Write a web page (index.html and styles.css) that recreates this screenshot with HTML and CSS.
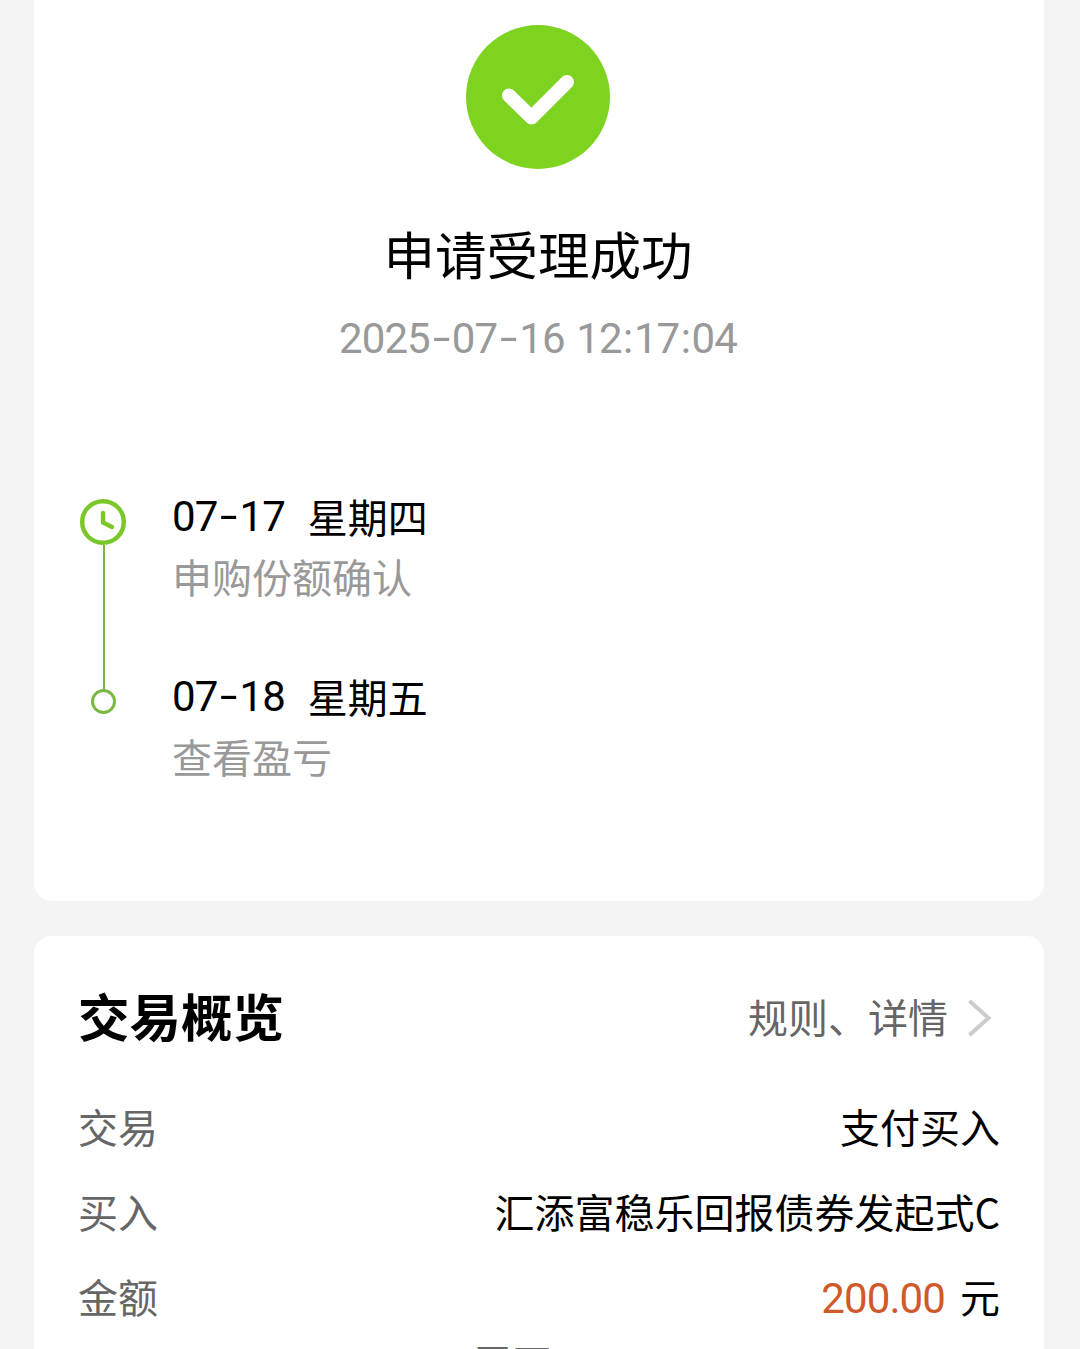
FILE: index.html
```html
<!DOCTYPE html>
<html lang="zh-CN">
<head>
    <meta charset="UTF-8">
    <meta name="viewport" content="width=device-width, initial-scale=1.0">
    <title>申请受理成功</title>
    <link rel="stylesheet" href="styles.css">
</head>
<body>
    <main>
        <section class="card result">
            <svg class="success-icon" viewBox="0 0 144 144">
                <circle cx="72" cy="72" r="72" fill="#7ed321"/>
                <path d="M43 70.500 L65.500 92.500 L101 57" fill="none" stroke="#fff" stroke-width="14" stroke-linecap="round" stroke-linejoin="round"/>
            </svg>
            <h1>申请受理成功</h1>
            <p class="time num">2025<span class="dash">-</span>07<span class="dash">-</span>16 12<span class="colon">:</span>17<span class="colon">:</span>04</p>

            <ul class="timeline">
                <li>
                    <div class="marker">
                        <svg class="clock" viewBox="0 0 46 46">
                            <circle cx="23" cy="23" r="20.800" fill="none" stroke="#7ac729" stroke-width="4.400"/>
                            <path d="M23 14 V23.500 L32 28" fill="none" stroke="#7ac729" stroke-width="4.400" stroke-linecap="round" stroke-linejoin="round"/>
                        </svg>
                        <span class="line"></span>
                    </div>
                    <div class="step">
                        <p class="date"><span class="num">07<span class="dash">-</span>17</span><span>星期四</span></p>
                        <p class="desc">申购份额确认</p>
                    </div>
                </li>
                <li>
                    <div class="marker last">
                        <span class="line"></span>
                        <span class="dot"></span>
                    </div>
                    <div class="step">
                        <p class="date"><span class="num">07<span class="dash">-</span>18</span><span>星期五</span></p>
                        <p class="desc">查看盈亏</p>
                    </div>
                </li>
            </ul>
        </section>

        <section class="card overview">
            <div class="overview-head">
                <h2>交易概览</h2>
                <a class="rules" href="#">
                    规则、详情
                    <svg class="arrow" viewBox="0 0 24 38">
                        <path d="M1.500 2 L20.500 19 L1.500 36" fill="none" stroke="#ccc" stroke-width="4"/>
                    </svg>
                </a>
            </div>
            <dl>
                <div class="row">
                    <dt>交易</dt>
                    <dd>支付买入</dd>
                </div>
                <div class="row">
                    <dt>买入</dt>
                    <dd>汇添富稳乐回报债券发起式C</dd>
                </div>
                <div class="row">
                    <dt>金额</dt>
                    <dd><span class="amount num">200.00</span>元</dd>
                </div>
            </dl>
            <div class="more">展开</div>
        </section>
    </main>
</body>
</html>
```

FILE: styles.css
```css
/* Basic reset */
* {
    margin: 0;
    padding: 0;
    box-sizing: border-box;
}

body {
    height: 1349px;
    overflow: hidden;
    font-family: 'Noto Sans CJK SC', sans-serif;
    font-size: 40px;
    color: #000;
    background-color: #f4f4f4;
}

main {
    height: 1349px;
    padding: 0 36px 0 34px;
    overflow: hidden;
}

.num {
    font-family: Roboto, 'Noto Sans CJK SC', sans-serif;
}

.dash {
    display: inline-block;
    width: 22px;
    text-align: center;
    transform: translateY(-1px) scaleX(1.5);
}

.colon {
    padding: 0 1.5px;
}

.card {
    background-color: #fff;
    border-radius: 18px;
}

/* Result card */
.result {
    height: 901px;
    padding: 25px 47px 0 45px;
    border-top-left-radius: 0;
    border-top-right-radius: 0;
}

.success-icon {
    display: block;
    width: 144px;
    height: 144px;
    margin: 0 auto;
}

.result h1 {
    margin-top: 54px;
    font-size: 51.5px;
    font-weight: 400;
    line-height: 60px;
    text-align: center;
}

.time {
    margin-top: 31px;
    font-size: 42px;
    line-height: 50px;
    letter-spacing: -0.9px;
    word-spacing: 2px;
    color: #999;
    text-align: center;
}

/* Timeline */
.timeline {
    margin-top: 122px;
    padding-left: 1px;
    list-style: none;
}

.timeline li {
    display: flex;
    gap: 46px;
    height: 180px;
}

.marker {
    display: flex;
    flex-direction: column;
    align-items: center;
    width: 46px;
    padding-top: 13px;
}

.clock {
    width: 46px;
    height: 46px;
}

.line {
    flex: 1;
    width: 2px;
    margin-left: 2px;
    background-color: #78b843;
}

.marker.last {
    padding-top: 0;
}

.marker.last .line {
    flex: 0 0 23px;
}

.dot {
    width: 25px;
    height: 25px;
    border: 3px solid #78b843;
    border-radius: 50%;
}

.step p {
    height: 60px;
    line-height: 60px;
}

.date {
    display: flex;
    gap: 23px;
}

.date .num {
    padding-top: 1px;
    font-size: 42px;
    letter-spacing: -0.9px;
}

.desc {
    color: #999;
}

/* Overview card */
.overview {
    height: 500px;
    margin-top: 35px;
    padding: 38px 44px 0;
}

.overview-head {
    display: flex;
    justify-content: space-between;
    align-items: center;
    height: 80px;
}

.overview-head h2 {
    font-size: 51.5px;
    font-weight: 700;
}

.rules {
    display: flex;
    align-items: center;
    gap: 20px;
    margin-right: 8px;
    padding-top: 3px;
    color: #666;
    text-decoration: none;
}

.arrow {
    width: 24px;
    height: 38px;
    margin-top: 4px;
}

.overview dl {
    margin-top: 30px;
}

.row {
    display: flex;
    justify-content: space-between;
    height: 85px;
    line-height: 85px;
}

.row dt {
    color: #666;
}

.amount {
    margin-right: 15px;
    font-size: 42px;
    letter-spacing: -0.9px;
    color: #d0592b;
}

.more {
    margin: -2px 54px 0 0;
    line-height: 50px;
    color: #666;
    text-align: center;
}
```
